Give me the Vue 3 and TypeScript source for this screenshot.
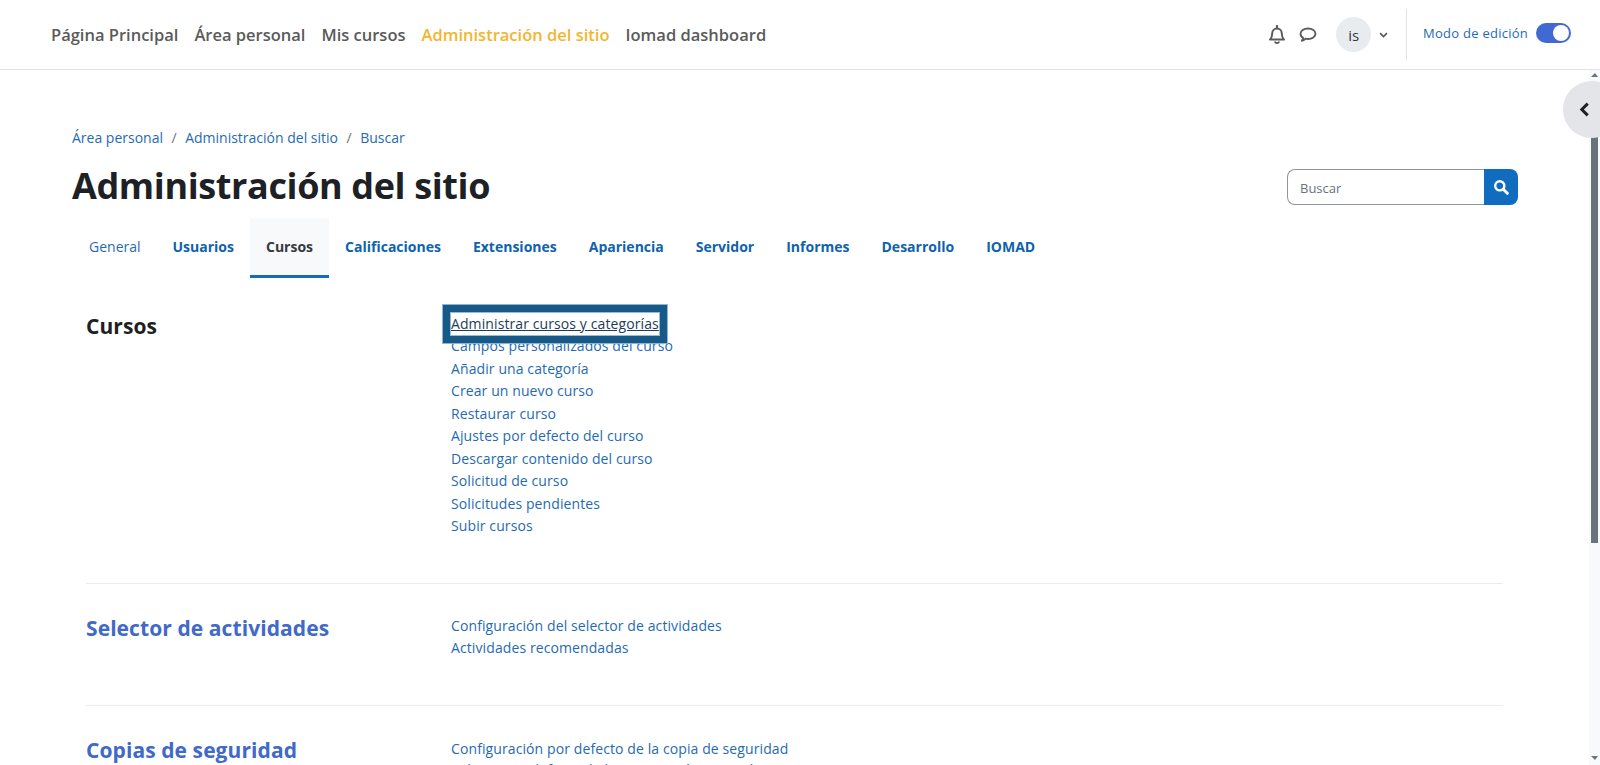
<script setup lang="ts">
const navItems: string[] = ['Página Principal', 'Área personal', 'Mis cursos', 'Administración del sitio', 'Iomad dashboard']
const tabs: string[] = ['General', 'Usuarios', 'Cursos', 'Calificaciones', 'Extensiones', 'Apariencia', 'Servidor', 'Informes', 'Desarrollo', 'IOMAD']
const courseLinks: string[] = [
  'Campos personalizados del curso', 'Añadir una categoría', 'Crear un nuevo curso', 'Restaurar curso',
  'Ajustes por defecto del curso', 'Descargar contenido del curso', 'Solicitud de curso', 'Solicitudes pendientes', 'Subir cursos',
]
const selectorLinks: string[] = ['Configuración del selector de actividades', 'Actividades recomendadas']
const backupLinks: string[] = ['Configuración por defecto de la copia de seguridad', 'Valores por defecto de la importación general']
</script>

<template>
  <div class="page">
    <header class="navbar">
      <nav class="primary">
        <a v-for="item in navItems" :key="item" class="nav-item" :class="{ current: item === 'Administración del sitio' }">{{ item }}</a>
      </nav>
      <div class="tools">
        <svg class="icon bell" viewBox="0 0 18 19" width="18" height="19" fill="none" stroke="#5c5c5c" stroke-width="2">
          <path d="M2 14.600c1.400-1.400 2.200-2.600 2.200-6 0-3 2.100-5.100 4.800-5.100s4.800 2.100 4.800 5.100c0 3.400.8 4.600 2.200 6z" stroke-linejoin="round" />
          <path d="M9 1v2.200" stroke-linecap="round" stroke-width="2.200" />
          <path d="M6.800 16.400c.3 1 1.100 1.600 2.200 1.600s1.900-.6 2.200-1.600" stroke-width="1.800" />
        </svg>
        <svg class="icon speech" viewBox="0 0 18 16" width="18" height="16" fill="none" stroke="#5c5c5c" stroke-width="1.900">
          <path d="M9 1.500c4.200 0 7.500 2.300 7.500 5.300S13.200 12 9 12c-.9 0-1.700-.1-2.500-.3-1 .9-2.200 1.800-3.700 2.100.7-.9 1.200-2 1.300-3C2.500 9.900 1.500 8.500 1.500 6.800c0-3 3.300-5.300 7.500-5.300z" stroke-linejoin="round" />
        </svg>
        <span class="avatar">is</span>
        <svg class="caret" viewBox="0 0 10 7" width="9" height="6" fill="none" stroke="#555" stroke-width="1.800">
          <path d="M1 1.300l4 4 4-4" />
        </svg>
        <span class="divider"></span>
        <span class="edit-label">Modo de edición</span>
        <span class="switch"><span class="knob"></span></span>
      </div>
    </header>

    <main class="content">
      <div class="breadcrumb">
        <a>Área personal</a><span class="sep">/</span><a>Administración del sitio</a><span class="sep">/</span><a>Buscar</a>
      </div>
      <div class="title-row">
        <h1>Administración del sitio</h1>
        <form class="search" @submit.prevent>
          <input type="text" placeholder="Buscar" />
          <button type="button" aria-label="Buscar">
            <svg viewBox="0 0 16 16" width="16" height="16" fill="none" stroke="#fff">
              <circle cx="6.800" cy="6.800" r="4.600" stroke-width="2.400" />
              <path d="M10.300 10.300l4 4" stroke-width="3" stroke-linecap="round" />
            </svg>
          </button>
        </form>
      </div>

      <ul class="tabs">
        <li v-for="tab in tabs" :key="tab" class="tab" :class="{ first: tab === 'General', active: tab === 'Cursos' }">{{ tab }}</li>
      </ul>

      <section class="block block-first">
        <h2 class="dark">Cursos</h2>
        <div class="links">
          <a class="focused">Administrar cursos y categorías</a>
          <a v-for="link in courseLinks" :key="link">{{ link }}</a>
        </div>
      </section>
      <section class="block block-second">
        <h2>Selector de actividades</h2>
        <div class="links">
          <a v-for="link in selectorLinks" :key="link">{{ link }}</a>
        </div>
      </section>
      <section class="block block-third">
        <h2>Copias de seguridad</h2>
        <div class="links">
          <a v-for="link in backupLinks" :key="link">{{ link }}</a>
        </div>
      </section>
    </main>

    <div class="scrollbar">
      <span class="arrow up"></span>
      <span class="thumb"></span>
      <span class="arrow down"></span>
    </div>
    <div class="drawer-toggle">
      <svg viewBox="0 0 10 14" width="11" height="15" fill="none" stroke="#1d2125" stroke-width="2.800">
        <path d="M8 1.500L2.500 7 8 12.500" />
      </svg>
    </div>
  </div>
</template>

<style>
html, body { margin: 0; padding: 0; background: #fff; overflow: hidden; }
</style>

<style scoped>
.page {
  position: relative;
  height: 765px;
  overflow: hidden;
  background: #fff;
  font-family: "Open Sans", "Noto Sans", sans-serif;
  font-size: 14px;
  color: #1d2125;
}
.navbar {
  height: 69px;
  border-bottom: 1px solid #dee2e6;
  display: flex;
  align-items: center;
  padding-left: 43px;
  padding-right: 29px;
}
.primary { display: flex; }
.nav-item {
  padding: 0 8px;
  font-size: 16.500px;
  font-weight: 600;
  color: #5a5a5a;
  letter-spacing: 0;
}
.nav-item.current { color: #f3b52f; }
.tools { margin-left: auto; display: flex; align-items: center; height: 100%; }
.icon { display: block; }
.bell { margin-right: 13px; }
.speech { margin-right: 19px; margin-top: 1px; }
.avatar {
  width: 35px;
  height: 35px;
  border-radius: 50%;
  background: #e9ecef;
  display: flex;
  align-items: center;
  justify-content: center;
  font-size: 15px;
  color: #343a40;
}
.caret { margin-left: 8px; }
.divider { width: 1px; height: 51px; background: #dee2e6; margin-left: 18px; margin-right: 16px; }
.edit-label { color: #1f6bb0; font-size: 13px; letter-spacing: 0.250px; margin-right: 8px; margin-top: -4px; }
.switch {
  width: 35px;
  height: 20px;
  border-radius: 10px;
  background: #4169d3;
  display: flex;
  align-items: center;
  justify-content: flex-end;
  padding-right: 2px;
  box-sizing: border-box;
  margin-top: -3px;
}
.knob { width: 16px; height: 16px; border-radius: 50%; background: #fff; }

.content { padding: 57px 0 0 72px; }
.breadcrumb { display: flex; align-items: center; height: 20px; color: #1f6bb0; font-size: 14px; letter-spacing: 0; }
.sep { color: #6a737b; margin: 0 8.500px; }
.title-row {
  display: flex;
  align-items: center;
  justify-content: space-between;
  height: 36px;
  margin-top: 22px;
  padding-right: 82px;
}
h1 { margin: 0 0 2px; font-size: 36px; font-weight: 700; letter-spacing: -0.380px; line-height: 36px; }
.search { display: flex; width: 231px; height: 36px; }
.search input {
  flex: 1;
  min-width: 0;
  box-sizing: border-box;
  border: 1px solid #8f959e;
  border-right: none;
  border-radius: 8px 0 0 8px;
  padding: 2px 12px 0;
  font: inherit;
  font-size: 13px;
  outline: none;
}
.search input::placeholder { color: #6a737b; opacity: 1; }
.search button {
  width: 34px;
  border: none;
  border-radius: 0 8px 8px 0;
  background: #0f6cbf;
  display: flex;
  align-items: center;
  justify-content: center;
  padding: 0;
}
.tabs {
  list-style: none;
  margin: 13px 0 0;
  padding: 0 0 0 1px;
  display: flex;
}
.tab {
  height: 55px;
  border-bottom: 3px solid transparent;
  padding: 1px 16px;
  display: flex;
  align-items: center;
  font-size: 14px;
  font-weight: 700;
  color: #0f62ad;
  letter-spacing: 0;
}
.tab.first { font-weight: 400; color: #1f6bb0; }
.tab.active { background: #f8f9fa; border-bottom-color: #0f6cbf; color: #343a40; }

.block {
  display: grid;
  grid-template-columns: 365px 1fr;
  margin-left: 14px;
  margin-right: 97px;
}
.block-first { margin-top: 25px; padding-bottom: 45.500px; }
.block-second { border-top: 1px solid #e9ecef; padding-top: 30px; height: 91px; }
.block-third { border-top: 1px solid #e9ecef; padding-top: 30px; }
h2 { margin: -1px 0 0; font-size: 21px; font-weight: 700; color: #4169c8; line-height: 30px; letter-spacing: 0.080px; }
h2.dark { color: #1d2125; margin-top: 8px; }
.links { display: flex; flex-direction: column; }
.links a { display: block; line-height: 22.500px; color: #1f6bb0; font-size: 14px; letter-spacing: 0.100px; width: max-content; }
.block-first .links { padding-top: 9.500px; }
.block-second .links { padding-top: 0.500px; }
.block-third .links { padding-top: 2.250px; }
.block-third .links a { line-height: 21px; }
.links a.focused {
  position: relative;
  color: #1d3c56;
  text-decoration: underline;
  background: #fff;
  box-shadow: 0 0 0 8px #185a87, 0 0 0 9px #8fb4d4;
  outline: 1px solid #9cb9d3;
  z-index: 1;
}

.scrollbar {
  position: absolute;
  top: 70px;
  right: 0;
  bottom: 0;
  width: 11px;
  background: #f8f9fa;
}
.thumb { position: absolute; left: 2px; right: 2px; top: 60px; height: 413px; background: #6a737b; }
.arrow { position: absolute; left: 2px; width: 0; height: 0; border-left: 4px solid transparent; border-right: 3px solid transparent; }
.arrow.up { top: 3px; border-bottom: 4px solid #6a737b; }
.arrow.down { bottom: 5px; border-top: 4px solid #6a737b; }
.drawer-toggle {
  position: absolute;
  left: 1563px;
  top: 81px;
  width: 57px;
  height: 57px;
  border-radius: 50%;
  background: #e3e5e9;
  display: flex;
  align-items: center;
  padding-left: 16px;
  box-sizing: border-box;
}
</style>
